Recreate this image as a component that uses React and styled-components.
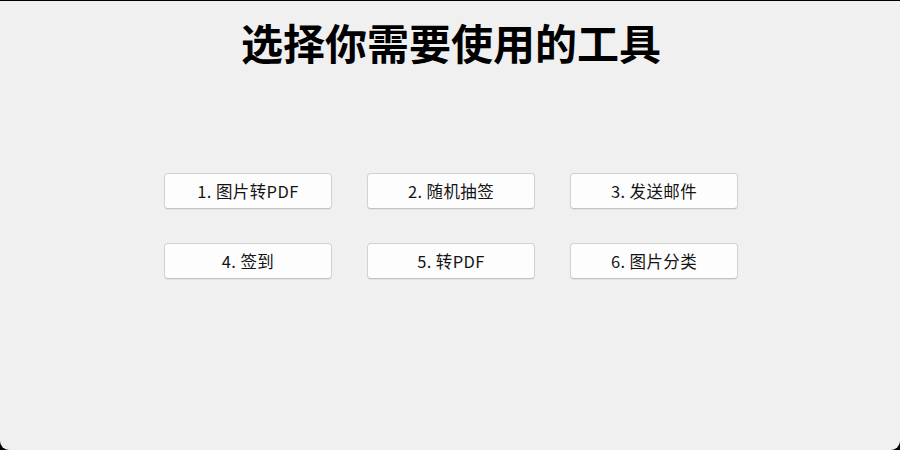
import React from 'react'
import styled, { createGlobalStyle } from 'styled-components'

const GlobalStyle = createGlobalStyle`
html, body {
    margin: 0;
    padding: 0;
    background: #000;
}
* {
    box-sizing: border-box;
}
`

const Window = styled.div`
width: 900px;
height: 449px;
margin-top: 1px;
background: #f0f0f0;
border-radius: 0 0 9px 9px;
display: flex;
flex-direction: column;
align-items: center;
font-family: "Noto Sans CJK SC", "Noto Sans", sans-serif;
`

const Title = styled.h1`
margin: 16px 0 0 2px;
font-size: 42px;
line-height: 50px;
font-weight: 700;
color: #000;
`

const ToolGrid = styled.div`
display: grid;
grid-template-columns: repeat(3, 168px);
column-gap: 35px;
row-gap: 34px;
margin: 106px 0 0 2px;
`

const ToolButton = styled.button`
height: 36px;
background: #fdfdfd;
border: 1px solid #d2d2d2;
border-bottom-color: #c2c2c2;
border-radius: 4px;
box-shadow: 0 1px 1px rgba(0, 0, 0, 0.06);
font-family: "Noto Sans CJK SC", "Noto Sans", sans-serif;
font-size: 16.5px;
letter-spacing: 0.4px;
color: #141414;
padding: 0;
cursor: pointer;
:hover {
    background: #f7f7f7;
}
`

const tools = [
    '1. 图片转PDF',
    '2. 随机抽签',
    '3. 发送邮件',
    '4. 签到',
    '5. 转PDF',
    '6. 图片分类',
]

export default function App() {
    return (
        <>
            <GlobalStyle />
            <Window>
                <Title>选择你需要使用的工具</Title>
                <ToolGrid>
                    {tools.map((name) => (
                        <ToolButton key={name}>{name}</ToolButton>
                    ))}
                </ToolGrid>
            </Window>
        </>
    )
}
